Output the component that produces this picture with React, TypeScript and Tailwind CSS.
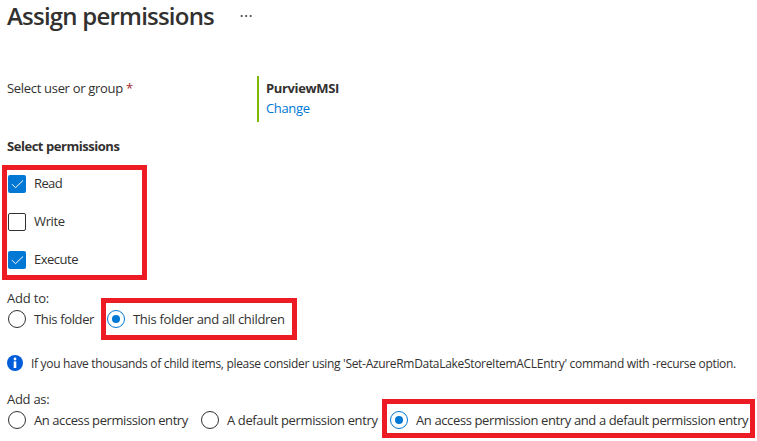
import type { ReactNode } from 'react';

function Checkbox({ label, checked, spacing }: { label: string; checked?: boolean; spacing: string }) {
  return (
    <label className="flex h-[18px] items-center">
      <span
        className={
          checked
            ? 'flex size-[18px] shrink-0 items-center justify-center rounded-xs bg-[#0078d4]'
            : 'size-[18px] shrink-0 rounded-xs border border-[#323130]'
        }
      >
        {checked && (
          <svg viewBox="0 0 18 18" className="size-[18px]" fill="none" stroke="#fff" strokeWidth="1">
            <path d="M4 9.2l3.5 3.5L15 5.5" />
          </svg>
        )}
      </span>
      <span className={`mb-0.5 ml-2 ${spacing}`}>{label}</span>
    </label>
  );
}

function Radio({ label, checked, width, spacing, children }: { label: string; checked?: boolean; width: string; spacing: string; children?: ReactNode }) {
  return (
    <label className={`relative flex h-[18px] shrink-0 items-center ${width}`}>
      <span
        className={`flex size-[18px] shrink-0 items-center justify-center rounded-full border ${
          checked ? 'border-[#0078d4]' : 'border-[#323130]'
        }`}
      >
        {checked && <span className="size-2 rounded-full bg-[#0078d4]" />}
      </span>
      <span className={`ml-2 ${spacing}`}>{label}</span>
      {children}
    </label>
  );
}

export default function App() {
  return (
    <main className="h-[441px] w-[757px] overflow-hidden bg-white pl-2 font-['Open_Sans',sans-serif] text-[13px] leading-5 whitespace-nowrap text-[#323130]">
      <header className="-ml-px flex h-8 items-center">
        <h1 className="w-[233px] text-[24px] font-semibold tracking-[-0.78px]">Assign permissions</h1>
        <svg viewBox="0 0 12 2" className="h-0.5 w-3" fill="#605e5c">
          <path d="M.7 0h1.9v2H.7zM5.2 0h1.9v2H5.2zM9.7 0h1.9v2H9.7z" />
        </svg>
      </header>

      <section className="mt-11 -ml-px flex h-[46px]">
        <div className="w-[250px] pt-0.5 tracking-[-0.31px]">
          Select user or group <span className="text-[#a4262c]">*</span>
        </div>
        <div className="border-l-2 border-[#7fba00] pt-0.5 pl-[7px]">
          <div className="font-bold tracking-[-0.35px]">PurviewMSI</div>
          <a className="block tracking-[-0.35px] text-[#0078d4]">Change</a>
        </div>
      </section>

      <h2 className="mt-3.5 -ml-px h-5 font-bold tracking-[-0.46px]">Select permissions</h2>
      <div className="mt-[9px] -ml-1.5 flex h-[115px] w-[145px] flex-col gap-5 border-5 border-[#ed1c24] pt-[5px] pl-px">
        <Checkbox label="Read" checked spacing="tracking-[-0.6px]" />
        <Checkbox label="Write" spacing="tracking-[-0.35px]" />
        <Checkbox label="Execute" checked spacing="tracking-[-0.5px]" />
      </div>

      <div className="mt-2 -ml-px h-5 tracking-[-0.2px]">Add to:</div>
      <div className="mt-0.5 flex">
        <Radio label="This folder" width="w-[99px]" spacing="tracking-[-0.36px]" />
        <Radio label="This folder and all children" checked width="w-[180px]" spacing="tracking-[-0.31px]">
          <span className="absolute -top-3 -left-1.5 h-[42px] w-[196px] border-5 border-[#ed1c24]" />
        </Radio>
      </div>

      <div className="mt-[25px] -ml-px flex h-5 items-center">
        <svg viewBox="0 0 16 16" className="size-4 shrink-0">
          <circle cx="8" cy="8" r="8" fill="#015cda" />
          <circle cx="8" cy="4" r="1.4" fill="#fff" />
          <path d="M6.7 6.4h2.6v6.6H6.7z" fill="#fff" />
        </svg>
        <span className="mt-px ml-2 text-[12px] tracking-[-0.314px]">
          If you have thousands of child items, please consider using 'Set-AzureRmDataLakeStoreItemACLEntry' command with -recurse option.
        </span>
      </div>

      <div className="mt-4 -ml-px h-5 tracking-[-0.28px]">Add as:</div>
      <div className="mt-0.5 flex">
        <Radio label="An access permission entry" width="w-[193px]" spacing="tracking-[-0.42px]" />
        <Radio label="A default permission entry" width="w-[189px]" spacing="tracking-[-0.37px]" />
        <Radio label="An access permission entry and a default permission entry" checked width="w-[360px]" spacing="tracking-[-0.38px]">
          <span className="absolute -top-3 -left-2 h-[39px] w-[373px] border-5 border-[#ed1c24]" />
        </Radio>
      </div>
    </main>
  );
}
